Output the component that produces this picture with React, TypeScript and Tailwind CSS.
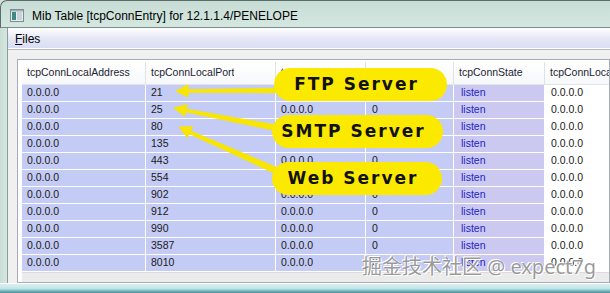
const rows = ["21", "25", "80", "135", "443", "554", "902", "912", "990", "3587", "8010"];

const cols = [
  { w: "w-[124px]", name: "tcpConnLocalAddress", clip: true },
  { w: "w-[130px]", name: "tcpConnLocalPort", clip: true },
  { w: "w-[90px]", name: "tcpConnRemAddress", clip: true },
  { w: "w-[88px]", name: "tcpConnRemPort", clip: true },
  { w: "w-[91px]", name: "tcpConnState", clip: true },
  { w: "w-[110px]", name: "tcpConnLocalAddress", clip: false },
];

function Row({ port }: { port: string }) {
  const cell = "h-[17px] shrink-0 flex items-center border-r border-b border-white pl-[5px] whitespace-nowrap overflow-hidden";
  return (
    <div className="flex text-[10.5px] text-[#1a1a1a]">
      <div className={`${cell} w-[124px] bg-[#c4cbf4]`}>0.0.0.0</div>
      <div className={`${cell} w-[130px] bg-[#c4cbf4]`}>{port}</div>
      <div className={`${cell} w-[90px] bg-[#c4cbf4]`}>0.0.0.0</div>
      <div className={`${cell} w-[88px] bg-[#c4cbf4] pl-[6px]`}>0</div>
      <div className={`${cell} w-[91px] bg-[#cbc9ef] pl-[7px] text-[#2424c8]`}>listen</div>
      <div className={`${cell} w-[110px] bg-white pl-[6px]`}>0.0.0.0</div>
    </div>
  );
}

function Bubble({ top, left, w, text }: { top: string; left: string; w: string; text: string }) {
  return (
    <div
      className={`absolute ${top} ${left} ${w} h-[33px] rounded-full bg-[#fbe900] flex items-center justify-center pr-[8px] font-['DejaVu_Sans',sans-serif] font-bold text-[17px] tracking-[2px] text-[#111]`}
    >
      {text}
    </div>
  );
}

export default function App() {
  return (
    <div className="relative w-[610px] h-[293px] overflow-hidden flex flex-col bg-[#d0e4dd] font-['Liberation_Sans',Arial,sans-serif]">
      {/* title bar */}
      <div className="h-[28px] shrink-0 flex items-center pl-[9px] pt-[3px] gap-[8px] border-b border-[#7b8c87] bg-linear-to-b from-[#c6dcd4] to-[#d4e8e1] rounded-tl-[7px] border-t border-l border-t-[#5b6d68] border-l-[#5b6d68]">
        <svg width="14" height="13" viewBox="0 0 14 13">
          <rect x="0.5" y="0.5" width="13" height="12" fill="#e8eef0" stroke="#7d8a90" />
          <rect x="2" y="3" width="4" height="8" fill="#3e8a82" />
          <rect x="7" y="3" width="5" height="8" fill="#c9d3d8" />
          <rect x="1" y="1" width="12" height="1.5" fill="#9fb0b8" />
        </svg>
        <span className="text-[12px] text-black leading-none">Mib Table [tcpConnEntry] for 12.1.1.4/PENELOPE</span>
      </div>

      {/* body */}
      <div className="flex-1 flex min-h-0">
        <div className="w-[8px] shrink-0 border-r border-[#8c9d98] bg-linear-to-r from-[#c9ddd6] to-[#d6e7e1]" />
        <div className="flex-1 flex flex-col min-w-0">
          {/* menu */}
          <div className="h-[22px] shrink-0 flex items-center pl-[7px] pt-[1px] border-b border-[#b4b9c3] bg-linear-to-b from-[#ffffff] via-[#e4e7f6] to-[#d9ddf2] shadow-[inset_0_-1px_0_#ffffff]">
            <span className="text-[12px] text-black">
              <span className="underline">F</span>iles
            </span>
          </div>
          {/* client */}
          <div className="flex-1 min-h-0 bg-[#f0f0f0] pl-[9px] pt-[9px]">
            <div className="h-full border border-[#a7adb6] bg-white pl-[4px] pt-[2px] flex flex-col overflow-hidden">
              {/* header */}
              <div className="h-[23px] shrink-0 flex border-b border-[#e2e4e8] bg-linear-to-b from-white to-[#f7f8fa] text-[10.5px] text-[#1c2433]">
                {cols.map((c, i) => (
                  <div
                    key={i}
                    className={`${c.w} shrink-0 h-full flex items-center border-r border-[#e0e2e6] pl-[5px] pr-[4px] whitespace-nowrap overflow-hidden ${c.clip ? "text-ellipsis" : ""}`}
                  >
                    <span className={c.clip ? "overflow-hidden text-ellipsis" : ""}>{c.name}</span>
                  </div>
                ))}
              </div>
              {rows.map((p) => (
                <Row key={p} port={p} />
              ))}
              <div className="flex-1 bg-[#ebebeb] border-t border-[#dcdcdc]" />
            </div>
          </div>
        </div>
      </div>

      {/* bottom frame */}
      <div className="h-[10px] shrink-0 border-t border-white bg-linear-to-b from-[#dfeeec] via-[#bfe6ea] to-[#3f8f98]" />

      {/* arrows */}
      <svg className="absolute inset-0 pointer-events-none" width="610" height="293" viewBox="0 0 610 293">
        <g fill="#f8e600" stroke="#f8e600" strokeLinejoin="round">
          <polygon points="186,89.5 280,88 280,93 186,92.5" strokeWidth="0.5" />
          <polygon points="176,91 188,85 188,97" strokeWidth="1" />
          <polygon points="185,108.8 280,125.5 279,131.5 184.5,111.8" strokeWidth="0.5" />
          <polygon points="174,108 187,104.4 184.6,116.2" strokeWidth="1" />
          <polygon points="190,130.5 283,170 280,176 188.5,133.5" strokeWidth="0.5" />
          <polygon points="179,127 192.4,126.7 187.4,137.5" strokeWidth="1" />
        </g>
      </svg>

      <Bubble top="top-[68px]" left="left-[274px]" w="w-[173px]" text="FTP Server" />
      <Bubble top="top-[115px]" left="left-[272px]" w="w-[171px]" text="SMTP Server" />
      <Bubble top="top-[162px]" left="left-[272px]" w="w-[170px]" text="Web Server" />

      {/* watermark */}
      <div className="absolute left-[362px] top-[257px] text-[20px] leading-none whitespace-nowrap text-[rgba(115,115,115,0.72)] font-['Noto_Sans','Noto_Sans_CJK_SC',sans-serif] [text-shadow:0_0_1px_#fff,1px_1px_0_#fff,-1px_-1px_0_#fff]">
        掘金技术社区 @ expect7g
      </div>
    </div>
  );
}
